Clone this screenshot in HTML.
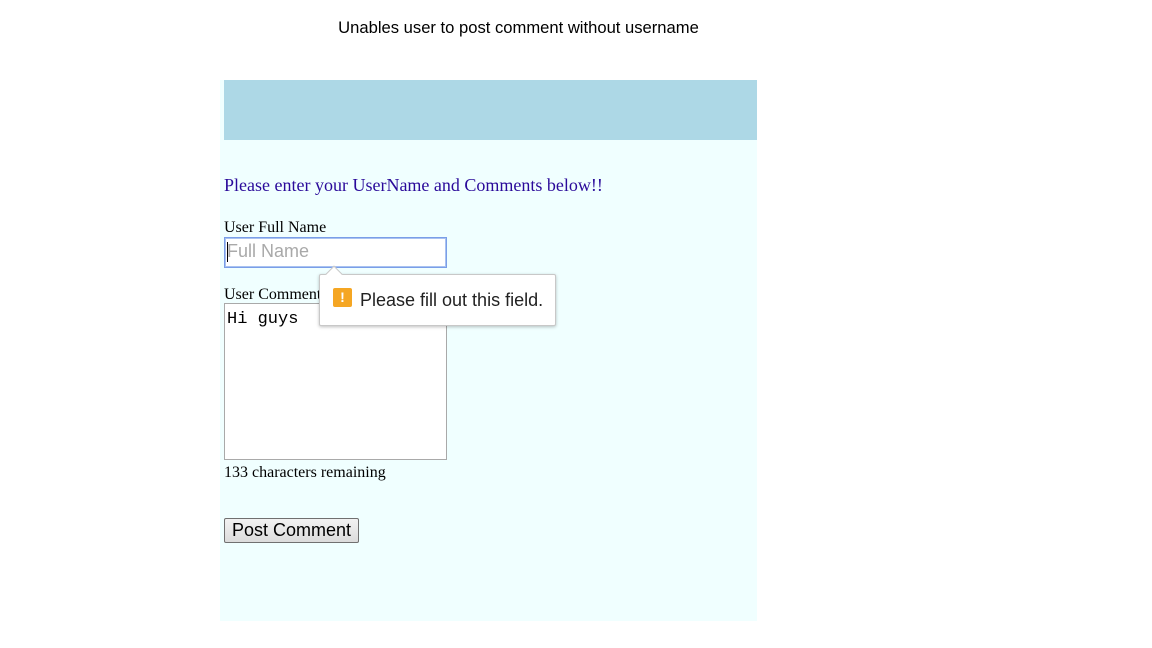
<!DOCTYPE html>
<html><head><meta charset="utf-8"><style>
html,body{margin:0;padding:0;width:1152px;height:648px;background:#fff;overflow:hidden;position:relative;font-family:"Liberation Serif",serif;}
.a{position:absolute;white-space:nowrap}
</style></head><body>
<div class="a" style="left:0;width:1037px;top:18px;text-align:center;font-family:'Liberation Sans',sans-serif;font-size:16.6px;color:#000">Unables user to post comment without username</div>
<div class="a" style="left:220px;top:80px;width:537px;height:541px;background:#f0ffff"></div>
<div class="a" style="left:224px;top:80px;width:533px;height:60px;background:#add8e6"></div>
<div class="a" style="left:224px;top:175px;font-size:18px;color:#2a0a9a">Please enter your UserName and Comments below!!</div>
<div class="a" style="left:224px;top:219px;font-size:16px;color:#000">User Full Name</div>
<div class="a" style="left:224px;top:237px;width:221px;height:29px;border:1px solid #7a9ee8;box-shadow:0 0 0 1px #a9c2f0 inset;background:#fff;box-sizing:content-box"></div>
<div class="a" style="left:227px;top:241px;font-family:'Liberation Sans',sans-serif;font-size:18px;color:#a9a9a9">Full Name</div>
<div class="a" style="left:227px;top:242px;width:1px;height:20px;background:#000"></div>
<div class="a" style="left:224px;top:286px;font-size:16px;color:#000">User Comments</div>
<div class="a" style="left:224px;top:303px;width:221px;height:155px;border:1px solid #a9a9a9;background:#fff"></div>
<div class="a" style="left:227px;top:310px;font-family:'Liberation Mono',monospace;font-size:17px;color:#000">Hi guys</div>
<div class="a" style="left:224px;top:464px;font-size:16px;color:#000">133 characters remaining</div>
<div class="a" style="left:224px;top:518px;width:133px;height:23px;border:1px solid #707070;background:linear-gradient(#f2f2f2,#dcdcdc);border-radius:2px;font-family:'Liberation Sans',sans-serif;font-size:18px;line-height:23px;text-align:center;color:#000">Post Comment</div>
<div class="a" style="left:319px;top:274px;width:235px;height:50px;border:1px solid #c8c8c8;background:#fff;box-shadow:0 1px 3px rgba(0,0,0,.25);border-radius:2px"></div>
<div class="a" style="left:328px;top:268px;width:11px;height:11px;background:#fff;border-left:1px solid #c8c8c8;border-top:1px solid #c8c8c8;transform:rotate(45deg)"></div>
<div class="a" style="left:333px;top:288px;width:19px;height:19px;background:#f5a623;border-radius:2px;color:#fff;font-family:'Liberation Sans',sans-serif;font-weight:bold;font-size:14px;line-height:19px;text-align:center">!</div>
<div class="a" style="left:360px;top:290px;font-family:'Liberation Sans',sans-serif;font-size:18px;color:#222">Please fill out this field.</div>
</body></html>
